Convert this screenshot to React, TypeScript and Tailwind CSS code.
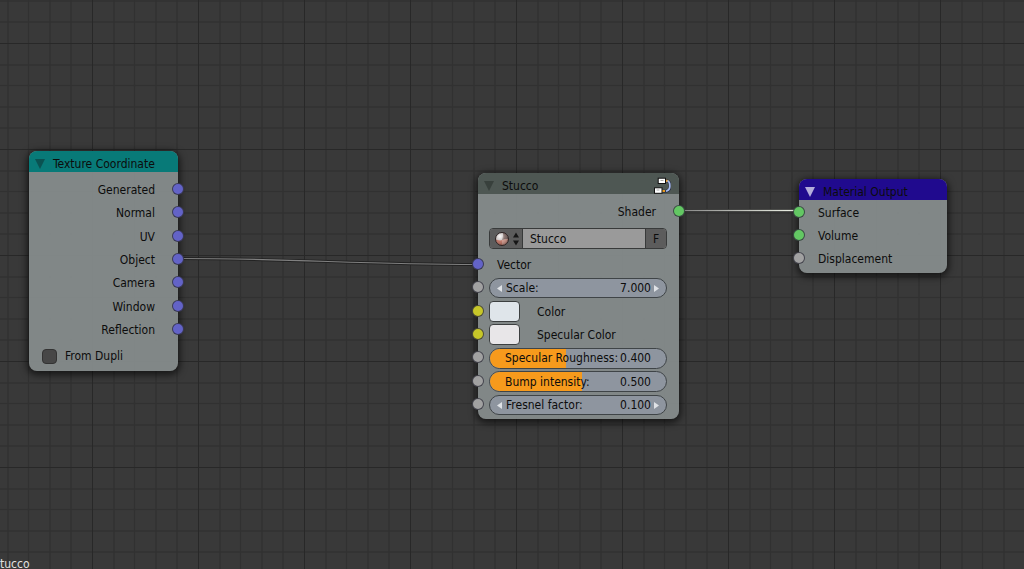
import { useState } from "react";
import type { ReactNode } from "react";

type Tone = "vector" | "shader" | "value" | "color";

const socketTone: Record<Tone, string> = {
  vector: "bg-[#6363c7]",
  shader: "bg-[#63c763]",
  value: "bg-[#a1a1a1]",
  color: "bg-[#c7c729]",
};

function Socket({ tone, side }: { tone: Tone; side: "left" | "right" }) {
  return (
    <span
      className={`absolute top-1/2 h-3 w-3 -translate-y-1/2 rounded-full border border-[#2e2e3a]/80 ${socketTone[tone]} ${
        side === "left" ? "-left-1.5" : "-right-1.5"
      }`}
    />
  );
}

function Row({ children, tone, side, className = "" }: { children: ReactNode; tone: Tone; side: "left" | "right"; className?: string }) {
  return (
    <li className={`relative flex items-center pt-0.5 ${className}`}>
      {children}
      <Socket tone={tone} side={side} />
    </li>
  );
}

function Node({
  title,
  place,
  header,
  arrow,
  icon,
  children,
}: {
  title: string;
  place: string;
  header: string;
  arrow: string;
  icon?: ReactNode;
  children: ReactNode;
}) {
  return (
    <section className={`absolute rounded-lg bg-[#899090]/90 shadow-[0_2px_7px_2px_rgba(0,0,0,0.6)] ${place}`}>
      <header className={`flex h-[21px] items-center rounded-t-lg pl-1.5 pr-2 pt-1 ${header}`}>
        <button type="button" aria-label={`Collapse ${title}`} className="mr-2">
          <svg viewBox="0 0 10 10" className={`h-2.5 w-2.5 ${arrow}`}>
            <path d="M0 0H10L5 10Z" fill="currentColor" />
          </svg>
        </button>
        <h2 className="grow">{title}</h2>
        {icon}
      </header>
      {children}
    </section>
  );
}

function GroupIcon() {
  return (
    <svg viewBox="0 0 18 18" className="h-[18px] w-[18px]" aria-hidden="true">
      <path d="M13 3.800H14.500Q17 5 17 8V10Q17 13.500 13 14.200H10" fill="none" stroke="#2c3240" strokeWidth="3" />
      <path d="M13 3.800H14.500Q16.800 5 16.800 8V10Q16.600 13.200 13 14.200" fill="none" stroke="#a9bdf0" strokeWidth="1.700" />
      <path d="M12 3.800H14.500M9 14H12" stroke="#e89a20" strokeWidth="2" />
      <rect x="5.200" y="1.200" width="7.300" height="5.300" fill="#fff" stroke="#111" />
      <rect x="1.500" y="10.800" width="7.500" height="5.500" fill="#fff" stroke="#111" />
      <path d="M7.500 3.500H10.500M3.500 13H6.500" stroke="#aaa" />
    </svg>
  );
}

function MaterialIcon() {
  return (
    <svg viewBox="0 0 16 16" className="h-4 w-4" aria-hidden="true">
      <defs>
        <radialGradient id="ball" cx="0.35" cy="0.3" r="0.75">
          <stop offset="0" stopColor="#fff" stopOpacity="0.9" />
          <stop offset="0.500" stopColor="#fff" stopOpacity="0.150" />
          <stop offset="1" stopColor="#000" stopOpacity="0.350" />
        </radialGradient>
      </defs>
      <circle cx="8" cy="8" r="6.500" fill="#b9b0ae" />
      <path d="M8 9Q11 7.500 14.400 8Q14 13 8.500 14.500Q7.500 11 8 9Z" fill="#c98a7c" />
      <path d="M1.600 8.500Q5 9.800 8 9Q7.500 11 8.500 14.500Q2.500 14 1.600 8.500Z" fill="#b3604f" />
      <path d="M9 1.500Q13.500 2 14.400 8Q11 7.500 8 9Q9.500 5 9 1.500Z" fill="#6b5450" />
      <circle cx="8" cy="8" r="6.500" fill="url(#ball)" stroke="#2a2020" />
    </svg>
  );
}

const pill = "relative ml-[11px] mr-3 flex min-w-0 grow items-center overflow-hidden rounded-full border border-[#3f4447] bg-[#8e959f]";

function NumberField({ label, initial }: { label: string; initial: string }) {
  const [value, setValue] = useState(initial);
  return (
    <label className={`${pill} h-5 px-[7px]`}>
      <svg viewBox="0 0 5 7" className="mr-1 h-[7px] w-[5px] text-[#dfe2e6]" aria-hidden="true">
        <path d="M5 0V7L0 3.500Z" fill="currentColor" />
      </svg>
      <span>{label}:</span>
      <input
        value={value}
        onChange={(e) => setValue(e.target.value)}
        className="w-0 min-w-0 grow bg-transparent pr-[3px] text-right outline-none"
      />
      <svg viewBox="0 0 5 7" className="h-[7px] w-[5px] text-[#dfe2e6]" aria-hidden="true">
        <path d="M0 0V7L5 3.500Z" fill="currentColor" />
      </svg>
    </label>
  );
}

function SliderField({ label, initial, max }: { label: string; initial: number; max: number }) {
  const [value, setValue] = useState(initial);
  return (
    <label className={`${pill} h-[21px] px-[15px]`}>
      <span className="absolute inset-y-0 left-0 bg-[#f79a1c]" style={{ width: `${(value / max) * 100}%` }} />
      <span className="relative grow whitespace-nowrap">{label}:</span>
      <output className="relative">{value.toFixed(3)}</output>
      <input
        type="range"
        min={0}
        max={max}
        step={0.001}
        value={value}
        onChange={(e) => setValue(Number(e.target.value))}
        className="absolute inset-0 h-full w-full cursor-pointer opacity-0"
      />
    </label>
  );
}

function ColorField({ label, swatch }: { label: string; swatch: string }) {
  return (
    <>
      <button type="button" aria-label={label} className={`ml-[11px] mr-[17px] h-[21px] w-[31px] rounded border border-[#3c3f40] ${swatch}`} />
      <span>{label}</span>
    </>
  );
}

function Grid() {
  return (
    <svg className="absolute inset-0 h-full w-full" aria-hidden="true">
      <defs>
        <pattern id="grid" x="92" y="43" width="106" height="106" patternUnits="userSpaceOnUse">
          <path d="M22 0V106M42.500 0V106M64 0V106M85 0V106M0 22H106M0 42.500H106M0 64H106M0 85H106" stroke="#313131" strokeWidth="1.500" />
          <path d="M0.500 0V106M0 0.500H106" stroke="#282828" />
        </pattern>
      </defs>
      <rect width="100%" height="100%" fill="url(#grid)" />
    </svg>
  );
}

function Links() {
  return (
    <svg className="absolute inset-0 h-full w-full" aria-hidden="true">
      <defs>
        <linearGradient id="shaderLink" gradientUnits="userSpaceOnUse" x1="679" y1="0" x2="799" y2="0">
          <stop offset="0" stopColor="#858585" />
          <stop offset="1" stopColor="#f0f4e8" />
        </linearGradient>
      </defs>
      <g fill="none">
        <path d="M178 258.500C298 258.500 358 264.500 478 264.500" stroke="#222" strokeWidth="3" />
        <path d="M178 258.500C298 258.500 358 264.500 478 264.500" stroke="#808080" strokeWidth="1.200" />
        <path d="M679 210.500H799" stroke="#1c1c1c" strokeWidth="3" />
        <path d="M679 210.500H799" stroke="url(#shaderLink)" strokeWidth="1.400" />
      </g>
    </svg>
  );
}

const outputs = ["Generated", "Normal", "UV", "Object", "Camera", "Window", "Reflection"];
const inputs: { name: string; tone: Tone }[] = [
  { name: "Surface", tone: "shader" },
  { name: "Volume", tone: "shader" },
  { name: "Displacement", tone: "value" },
];

export default function App() {
  return (
    <main className="relative h-screen w-full overflow-hidden bg-[#393939] font-['DejaVu_Sans_Condensed','DejaVu_Sans',sans-serif] text-[12px] leading-4 text-[#0c0c0c]">
      <Grid />
      <Links />

      <Node title="Texture Coordinate" place="left-[29px] top-[151px] w-[149px]" header="bg-[#087a78]" arrow="text-[#0a5251]">
        <ul className="mt-[5px] grid h-[164px] auto-rows-fr">
          {outputs.map((name) => (
            <Row key={name} tone="vector" side="right" className="justify-end pr-[23px]">
              {name}
            </Row>
          ))}
        </ul>
        <label className="flex items-center pb-[7px] pl-[13px] pt-[7px]">
          <input type="checkbox" className="mr-2 h-[15px] w-[15px] appearance-none rounded border border-[#333] bg-[#474747] checked:bg-[#777]" />
          From Dupli
        </label>
      </Node>

      <Node title="Stucco" place="left-[478px] top-[173px] w-[201px]" header="bg-[#4e5753]" arrow="text-[#38403c]" icon={<GroupIcon />}>
        <ul className="mt-[5px]">
          <Row tone="shader" side="right" className="h-6 justify-end pr-[23px]">
            Shader
          </Row>
        </ul>
        <div className="ml-[11px] mr-3 mt-[5px] flex h-[21px] overflow-hidden rounded border border-[#383a3a] bg-[#9a9a9a]">
          <button type="button" aria-label="Browse node groups" className="flex w-[33px] items-center justify-between border-r border-[#383a3a] bg-[#5c5c5c] pl-1 pr-[3px]">
            <MaterialIcon />
            <svg viewBox="0 0 6 14" className="h-3.5 w-1.5" aria-hidden="true">
              <path d="M0 5.500L3 0.500L6 5.500ZM0 8.500L3 13.500L6 8.500Z" fill="#161616" />
            </svg>
          </button>
          <input aria-label="Node group name" defaultValue="Stucco" className="w-0 min-w-0 grow bg-transparent px-[7px] outline-none" />
          <button type="button" aria-label="Fake user" className="w-[21px] border-l border-[#383a3a] bg-[#5c5c5c]">
            F
          </button>
        </div>
        <ul className="mb-[3px] mt-[3px] grid h-[164px] auto-rows-fr">
          <Row tone="vector" side="left" className="pl-[19px]">Vector</Row>
          <Row tone="value" side="left"><NumberField label="Scale" initial="7.000" /></Row>
          <Row tone="color" side="left"><ColorField label="Color" swatch="bg-[#dfe5ea]" /></Row>
          <Row tone="color" side="left"><ColorField label="Specular Color" swatch="bg-[#e8e6e8]" /></Row>
          <Row tone="value" side="left"><SliderField label="Specular Roughness" initial={0.4} max={0.93} /></Row>
          <Row tone="value" side="left"><SliderField label="Bump intensity" initial={0.5} max={0.96} /></Row>
          <Row tone="value" side="left"><NumberField label="Fresnel factor" initial="0.100" /></Row>
        </ul>
      </Node>

      <Node title="Material Output" place="left-[799px] top-[179px] w-[148px]" header="bg-[#200a8e]" arrow="text-[#b4addb]">
        <ul className="mb-[3px] grid h-[70px] auto-rows-fr">
          {inputs.map(({ name, tone }) => (
            <Row key={name} tone={tone} side="left" className="pl-[19px]">
              {name}
            </Row>
          ))}
        </ul>
      </Node>

      <p className="absolute bottom-0 left-0 leading-[9px] text-[#e0e0e0]">tucco</p>
    </main>
  );
}
